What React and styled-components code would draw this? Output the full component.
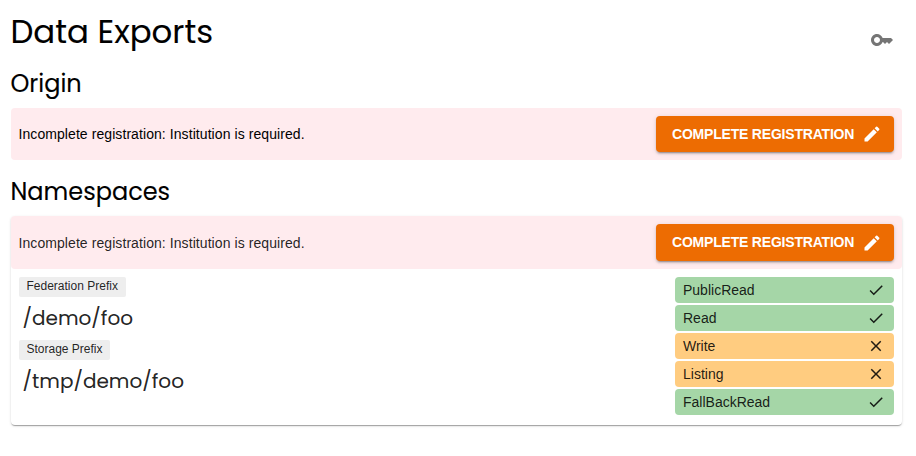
import React from "react";
import styled, { createGlobalStyle } from "styled-components";

const GlobalStyle = createGlobalStyle`
  * { box-sizing: border-box; }
  body {
    margin: 0;
    background: #fff;
    color: #000;
    font-family: "Liberation Sans", Helvetica, Arial, sans-serif;
    font-size: 14px;
  }
`;

const heading = `
  margin: 0;
  font-family: Poppins, Inter, sans-serif;
  font-feature-settings: "cv11";
  font-weight: 400;
  white-space: nowrap;
  -webkit-text-stroke: 0.1px currentColor;
`;

const Page = styled.main`
  width: 916px;
  height: 456px;
  padding: 11px 14px 0 11px;
  overflow: hidden;
`;

const Header = styled.header`
  display: flex;
  justify-content: space-between;
  height: 57px;
`;

const Title = styled.h1`
  ${heading}
  margin-left: -0.6px;
  font-size: 32.4px;
  line-height: 42px;
`;

const SectionTitle = styled.h2`
  ${heading}
  margin: 0 0 8px -0.5px;
  font-size: 24px;
  line-height: 32px;
`;

const KeyButton = styled.button`
  display: flex;
  align-self: flex-start;
  margin: 9px 0 0;
  padding: 8px;
  border: 0;
  background: none;
  color: #757575;
`;

const Icon = styled.svg`
  display: block;
  flex: none;
  width: ${(p) => p.$size}px;
  height: ${(p) => p.$size}px;
  fill: currentColor;
`;

const Alert = styled.div`
  display: flex;
  align-items: center;
  justify-content: space-between;
  height: ${(p) => p.$height}px;
  padding: 0 8px 0 7.5px;
  border-radius: 4px;
  background: #ffebee;
`;

const Message = styled.span`
  line-height: 20px;
  letter-spacing: 0.075px;
  white-space: nowrap;
`;

const Action = styled.button`
  display: flex;
  align-items: center;
  justify-content: space-between;
  width: 238px;
  height: ${(p) => p.$height}px;
  padding: 0 12px 0 16px;
  border: 0;
  border-radius: 4px;
  background: #ed6c02;
  color: #fff;
  font: 700 14px "Liberation Sans", Helvetica, Arial, sans-serif;
  white-space: nowrap;
  box-shadow: 0 3px 1px -2px rgba(0, 0, 0, 0.2), 0 2px 2px rgba(0, 0, 0, 0.14),
    0 1px 5px rgba(0, 0, 0, 0.12);
`;

const ActionLabel = styled.span`
  height: 17px;
  line-height: 16px;
  letter-spacing: -0.2px;
`;

const Section = styled.section`
  padding-bottom: 16px;
`;

const Card = styled.article`
  height: 209px;
  border-radius: 4px;
  color: rgba(0, 0, 0, 0.87);
  box-shadow: 0 2px 1px -1px rgba(0, 0, 0, 0.2), 0 1px 1px rgba(0, 0, 0, 0.14),
    0 1px 3px rgba(0, 0, 0, 0.12);
`;

const CardBody = styled.div`
  display: flex;
  justify-content: space-between;
  padding: 8px;
`;

const Prefix = styled.div`
  height: 63px;
`;

const Tag = styled.div`
  width: ${(p) => p.$width}px;
  height: 20px;
  padding-left: 7.5px;
  border-radius: 2px;
  background: #eee;
  font-size: 12px;
  line-height: 18px;
  white-space: nowrap;
`;

const Path = styled.div`
  ${heading}
  padding: 5px 0 0 3.5px;
  font-size: 20px;
  line-height: 32px;
`;

const Capabilities = styled.ul`
  display: grid;
  gap: 2px;
  width: 219px;
  margin: 0;
  padding: 0;
  list-style: none;
`;

const Capability = styled.li`
  display: flex;
  align-items: center;
  justify-content: space-between;
  height: 26px;
  padding: 0 9px 0 8px;
  border-radius: 4px;
  background: ${(p) => (p.$enabled ? "#a5d6a7" : "#ffcc80")};
`;

const PATHS = {
  edit: "M3 17.25V21h3.75L17.81 9.94l-3.75-3.75zM20.71 7.04c.39-.39.39-1.02 0-1.41l-2.34-2.34a.9959.9959 0 0 0-1.41 0l-1.83 1.83 3.75 3.75z",
  check: "M9 16.17 4.83 12l-1.42 1.41L9 19 21 7l-1.41-1.41z",
  close: "M19 6.41 17.59 5 12 10.59 6.41 5 5 6.41 10.59 12 5 17.59 6.41 19 12 13.41 17.59 19 19 17.59 13.41 12z",
  key: "M21 10h-8.35C11.83 7.67 9.61 6 7 6c-3.31 0-6 2.69-6 6s2.69 6 6 6c2.61 0 4.83-1.67 5.65-4H13l2 2 2-2 2 2 4-4.04zM7 15c-1.65 0-3-1.35-3-3s1.35-3 3-3 3 1.35 3 3-1.35 3-3 3",
};

function Glyph({ name, size }) {
  return (
    <Icon $size={size} viewBox="0 0 24 24" aria-hidden="true">
      <path d={PATHS[name]} />
    </Icon>
  );
}

function RegistrationAlert({ height, buttonHeight }) {
  return (
    <Alert $height={height}>
      <Message>Incomplete registration: Institution is required.</Message>
      <Action $height={buttonHeight}>
        <ActionLabel>COMPLETE REGISTRATION</ActionLabel>
        <Glyph name="edit" size={20} />
      </Action>
    </Alert>
  );
}

const capabilities = [
  ["PublicRead", true],
  ["Read", true],
  ["Write", false],
  ["Listing", false],
  ["FallBackRead", true],
];

export default function App() {
  return (
    <Page>
      <GlobalStyle />
      <Header>
        <Title>Data Exports</Title>
        <KeyButton aria-label="Key">
          <Glyph name="key" size={24} />
        </KeyButton>
      </Header>
      <Section>
        <SectionTitle>Origin</SectionTitle>
        <RegistrationAlert height={52} buttonHeight={36} />
      </Section>
      <Section>
        <SectionTitle>Namespaces</SectionTitle>
        <Card>
          <RegistrationAlert height={53} buttonHeight={37} />
          <CardBody>
            <div>
              <Prefix>
                <Tag $width={107}>Federation Prefix</Tag>
                <Path>/demo/foo</Path>
              </Prefix>
              <Prefix>
                <Tag $width={91}>Storage Prefix</Tag>
                <Path>/tmp/demo/foo</Path>
              </Prefix>
            </div>
            <Capabilities>
              {capabilities.map(([name, enabled]) => (
                <Capability key={name} $enabled={enabled}>
                  {name}
                  <Glyph name={enabled ? "check" : "close"} size={18} />
                </Capability>
              ))}
            </Capabilities>
          </CardBody>
        </Card>
      </Section>
    </Page>
  );
}
